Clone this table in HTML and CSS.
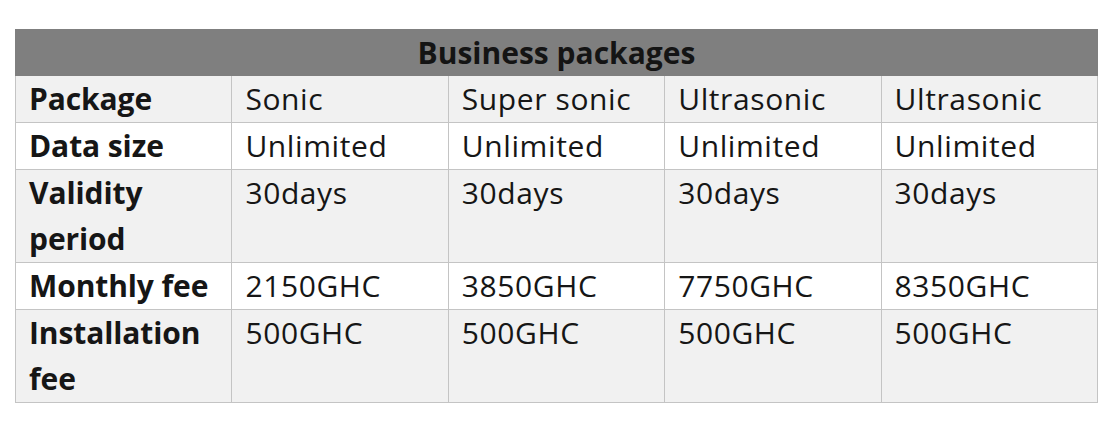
FILE: index.html
```html
<!DOCTYPE html>
<html>
<head>
<meta charset="utf-8">
<link rel="stylesheet" href="styles.css">
</head>
<body>
<table class="pkg">
  <colgroup>
    <col><col><col><col><col>
  </colgroup>
  <thead>
    <tr><th class="title" colspan="5">Business packages</th></tr>
  </thead>
  <tbody>
    <tr class="shade">
      <th>Package</th><td>Sonic</td><td>Super sonic</td><td>Ultrasonic</td><td>Ultrasonic</td>
    </tr>
    <tr>
      <th>Data size</th><td>Unlimited</td><td>Unlimited</td><td>Unlimited</td><td>Unlimited</td>
    </tr>
    <tr class="shade">
      <th>Validity period</th><td>30days</td><td>30days</td><td>30days</td><td>30days</td>
    </tr>
    <tr>
      <th>Monthly fee</th><td>2150GHC</td><td>3850GHC</td><td>7750GHC</td><td>8350GHC</td>
    </tr>
    <tr class="shade">
      <th>Installation fee</th><td>500GHC</td><td>500GHC</td><td>500GHC</td><td>500GHC</td>
    </tr>
  </tbody>
</table>
</body>
</html>
```

FILE: styles.css
```css
html, body {
  margin: 0;
  padding: 0;
  background: #ffffff;
}

body {
  padding: 29px 0 0 15px;
  font-family: "Open Sans", "Noto Sans", sans-serif;
  color: #161616;
}

.pkg {
  border-collapse: collapse;
  table-layout: fixed;
  width: 1083px;
  font-size: 30px;
  line-height: 46px;
}

.pkg col {
  width: 20%;
}

.pkg th,
.pkg td {
  border: 1px solid #c4c4c4;
  padding: 0 8px 0 13px;
  text-align: left;
  vertical-align: top;
  white-space: normal;
  overflow: hidden;
}

.pkg th {
  font-weight: 700;
  letter-spacing: -0.1px;
}

.pkg td {
  font-weight: 400;
  letter-spacing: 0.6px;
}

.pkg .title {
  background: #7f7f7f;
  text-align: center;
  border-color: #7f7f7f;
  padding: 0;
  color: #141414;
  line-height: 45px;
  letter-spacing: 0;
}

.pkg tbody tr {
  background: #ffffff;
}

.pkg tbody tr.shade {
  background: #f1f1f1;
}
```
